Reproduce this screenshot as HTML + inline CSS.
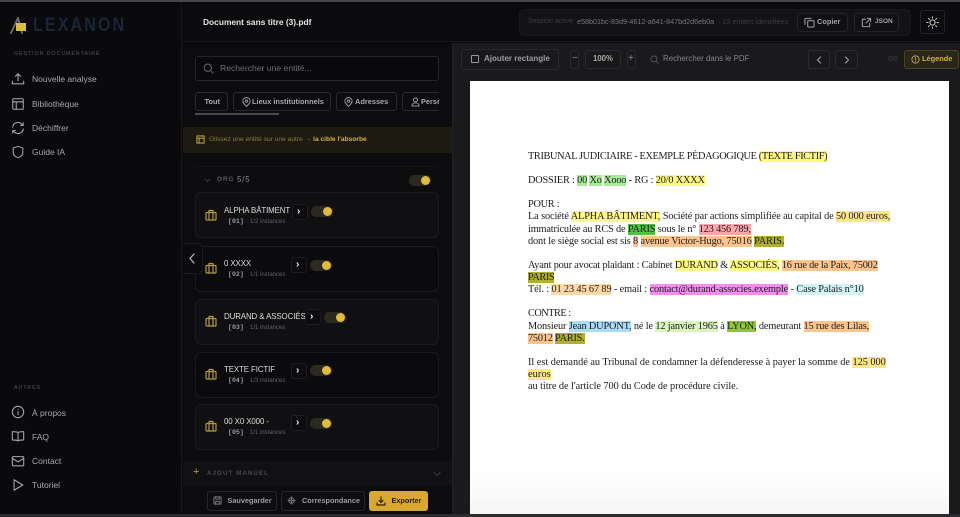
<!DOCTYPE html>
<html lang="fr"><head><meta charset="utf-8"><title>Lexanon</title>
<style>
*{box-sizing:border-box;margin:0;padding:0}
html,body{width:960px;height:517px;overflow:hidden;background:#0a0a0c;font-family:"Liberation Sans",sans-serif;color:#ddd}
body{filter:blur(.3px)}
.a{position:absolute;white-space:nowrap}
svg{position:absolute;fill:none;stroke:currentColor;stroke-width:1.5;stroke-linecap:round;stroke-linejoin:round}
.nav{position:absolute;left:32px;font-size:8.5px;color:#a8a8ac;line-height:12px;white-space:nowrap}
.ni{color:#a8a8ac;left:11px;width:14px;height:14px;stroke-width:1.2}
.sec{position:absolute;left:14px;font-size:5.2px;letter-spacing:1px;color:#55555b;white-space:nowrap}
.box{position:absolute;border:1px solid #232327;border-radius:3px}
.chip{position:absolute;top:92px;height:19px;border:1px solid #29292d;border-radius:3px;background:#0d0d10;font-size:7.4px;font-weight:bold;color:#a8a8ac;line-height:17px;white-space:nowrap}
.card{position:absolute;left:195px;width:244px;height:46px;border:1px solid #1b1b1f;border-radius:6px;background:#101013}
.name{position:absolute;left:224px;font-size:7.9px;letter-spacing:-.1px;color:#dcdcdc;white-space:nowrap;line-height:10px;margin-top:.5px}
.idx{position:absolute;left:228px;font-size:6.6px;font-family:"Liberation Mono",monospace;color:#9a9a9e;white-space:nowrap;font-weight:bold;line-height:8px;margin-top:1px}
.inst{position:absolute;left:250px;font-size:6px;color:#636368;white-space:nowrap;line-height:8px;margin-top:1px}
.arrow{position:absolute;width:16px;height:16px;border:1px solid #1e1e22;border-radius:3px;background:#0c0c0e;color:#eee}
.tog{position:absolute;width:22px;height:11px;border-radius:6px;background:#2c2a20}
.tog i{position:absolute;right:0;top:1px;width:9px;height:9px;border-radius:50%;background:#e2bb38}
.bag{color:#b39a3e;left:205px;width:12px;height:12px;stroke-width:1.2}
.btn{position:absolute;top:491px;height:20px;border:1px solid #26262a;border-radius:3px;background:#0e0e11;font-size:7.3px;font-weight:bold;color:#9c9ca0;line-height:18px;white-space:nowrap}
.tb{position:absolute;border:1px solid #2a2a2d;border-radius:3px;background:#19191b}
#doc{position:absolute;left:528px;top:1px;font-family:"Liberation Serif",serif;font-size:10.3px;color:#1c1c1c;white-space:nowrap}
#doc div{position:absolute;left:0;line-height:12px;height:12px}
#doc b{font-weight:normal}
.y{background:#fdf981}.g{background:#a6eb96}.o{background:#fdc58e}.ol{background:#b0b02e}.dg{background:#4fc144}
.r{background:#fba6ad}.yo{background:#fee688}.p{background:#f58cf0}.c{background:#d4f3f5}.b{background:#aadcfb}.lg{background:#d8f5bd}.lv{background:#8fc637}
</style></head><body>
<!-- frame strips -->
<div class="a" style="left:0;top:0;width:960px;height:2px;background:#454547"></div>
<div class="a" style="left:0;top:514px;width:960px;height:3px;background:#2b2b2d"></div>

<!-- sidebar -->
<div class="a" style="left:0;top:2px;width:182px;height:512px;background:#0a0a0d;border-right:1px solid #18181b"></div>
<svg style="left:10px;top:16px;width:18px;height:18px;stroke:#6a6a6a;stroke-width:2" viewBox="0 0 18 18"><path d="M1 17L8 2L12 17"/></svg>
<div class="a" style="left:16px;top:23px;width:10px;height:8px;background:#d9bf3c"></div>
<div class="a" style="left:33px;top:14px;font-size:19px;letter-spacing:2.4px;color:#1a2535;font-weight:bold;line-height:24px;transform:scaleX(.85);transform-origin:left">LEXANON</div>
<div class="sec" style="top:51px">GESTION DOCUMENTAIRE</div>
<svg class="ni" style="top:72px" viewBox="0 0 16 16"><path d="M1.500 10.500v3h13v-3M8 10V2M5 5l3-3 3 3"/></svg>
<div class="nav" style="top:73px">Nouvelle analyse</div>
<svg class="ni" style="top:97px" viewBox="0 0 16 16"><rect x="2" y="2" width="12" height="12" rx="1"/><path d="M2 5.500h12M6 5.500V14"/></svg>
<div class="nav" style="top:97.500px">Bibliothèque</div>
<svg class="ni" style="top:121px" viewBox="0 0 16 16"><path d="M2 7a6 6 0 0 1 11-2.500M14 2v3h-3M14 9a6 6 0 0 1-11 2.500M2 14v-3h3"/></svg>
<div class="nav" style="top:121.500px">Déchiffrer</div>
<svg class="ni" style="top:145px" viewBox="0 0 16 16"><path d="M8 1.500l5.500 2v5c0 3-2.500 5-5.500 6-3-1-5.500-3-5.500-6v-5z"/></svg>
<div class="nav" style="top:146px">Guide IA</div>
<div class="sec" style="top:385px">AUTRES</div>
<svg class="ni" style="top:405px" viewBox="0 0 16 16"><circle cx="8" cy="8" r="6.500"/><path d="M8 7.500v3.500M8 5v.2"/></svg>
<div class="nav" style="top:406.500px">À propos</div>
<svg class="ni" style="top:429px" viewBox="0 0 16 16"><path d="M8 4C6.500 3 4 3 1.500 3v9.500c2.500 0 5 0 6.500 1 1.500-1 4-1 6.500-1V3C12 3 9.500 3 8 4zM8 4v9.500"/></svg>
<div class="nav" style="top:430.500px">FAQ</div>
<svg class="ni" style="top:454px" viewBox="0 0 16 16"><rect x="1.500" y="3" width="13" height="10.500" rx="1"/><path d="M1.500 5l6.500 4 6.500-4"/></svg>
<div class="nav" style="top:455px">Contact</div>
<svg class="ni" style="top:478px" viewBox="0 0 16 16"><path d="M3.500 2l10 6-10 6z"/></svg>
<div class="nav" style="top:479px">Tutoriel</div>

<!-- header -->
<div class="a" style="left:183px;top:2px;width:777px;height:40px;background:#0b0b0e;border-bottom:1px solid #17171a"></div>
<div class="a" style="left:203px;top:16px;font-size:8.4px;font-weight:bold;color:#e4e4e4;line-height:12px">Document sans titre (3).pdf</div>
<div class="a" style="left:519px;top:9px;width:392px;height:27px;border-radius:6px;background:#131316;border:1px solid #19191c"></div>
<div class="a" style="left:528px;top:16px;font-size:7px;line-height:12px;color:#3c3c40">Session active</div>
<div class="a" style="left:577px;top:16px;font-size:7.2px;line-height:12px;color:#77777b">e58b01bc-83d9-4612-a641-847bd2d6eb0a</div>
<div class="a" style="left:718px;top:16px;font-size:7.200px;line-height:12px;color:#3c3c40">· 23 entités identifiées</div>
<div class="box" style="left:797px;top:13px;width:51px;height:19px;background:#111114"></div>
<svg style="left:804px;top:17px;width:11px;height:11px;color:#98989c;stroke-width:1.200" viewBox="0 0 12 12"><rect x="4" y="4" width="7" height="7" rx="1"/><path d="M8 1.500H2a1 1 0 0 0-1 1V8"/></svg>
<div class="a" style="left:817px;top:16px;font-size:7.400px;font-weight:bold;line-height:12px;color:#a4a4a8">Copier</div>
<div class="box" style="left:854px;top:13px;width:45px;height:19px;background:#111114"></div>
<svg style="left:861px;top:17px;width:11px;height:11px;color:#98989c;stroke-width:1.200" viewBox="0 0 12 12"><path d="M9.500 7v3.500h-8v-8H5M7 1.500h3.500V5M10.500 1.500L5.500 6.500"/></svg>
<div class="a" style="left:875px;top:16px;font-size:6.500px;font-weight:bold;line-height:12px;color:#a4a4a8">JSON</div>
<div class="box" style="left:920px;top:10px;width:25px;height:24px;background:#0c0c0f"></div>
<svg style="left:926px;top:16px;width:13px;height:13px;color:#c8c8c8;stroke-width:1.100" viewBox="0 0 14 14"><circle cx="7" cy="7" r="2.800"/><path d="M7 .8v1.400M7 11.800v1.400M.8 7h1.400M11.800 7h1.400M2.600 2.600l1 1M10.400 10.400l1 1M2.600 11.400l1-1M10.400 3.600l1-1"/></svg>

<!-- left panel -->
<div class="a" style="left:183px;top:43px;width:269px;height:471px;background:#0c0c0f"></div>
<div class="box" style="left:195px;top:56px;width:244px;height:25px;background:#09090b;border-color:#25252a"></div>
<svg style="left:203px;top:63px;width:11px;height:11px;color:#626266;stroke-width:1.200" viewBox="0 0 12 12"><circle cx="5.200" cy="5.200" r="4"/><path d="M8.200 8.200l2.800 2.800"/></svg>
<div class="a" style="left:220px;top:62px;font-size:8.600px;line-height:13px;color:#6d6d71">Rechercher une entité...</div>
<div class="chip" style="left:195px;width:33px;padding-left:8.500px">Tout</div>
<div class="chip" style="left:233px;width:98px;padding-left:18px">Lieux institutionnels</div>
<svg style="left:242px;top:97px;width:9px;height:10px;color:#98989c;stroke-width:1.100" viewBox="0 0 10 11"><path d="M5 10.500C2.500 8 1 6.500 1 4.500a4 4 0 0 1 8 0c0 2-1.500 3.500-4 6z"/><circle cx="5" cy="4.500" r="1.300"/></svg>
<div class="chip" style="left:336px;width:61px;padding-left:18px">Adresses</div>
<svg style="left:344px;top:97px;width:9px;height:10px;color:#98989c;stroke-width:1.100" viewBox="0 0 10 11"><path d="M5 10.500C2.500 8 1 6.500 1 4.500a4 4 0 0 1 8 0c0 2-1.500 3.500-4 6z"/><circle cx="5" cy="4.500" r="1.300"/></svg>
<div class="chip" style="left:402px;width:37px;padding-left:18px;border-right:0;border-radius:3px 0 0 3px;overflow:hidden">Perso</div>
<svg style="left:411px;top:97px;width:9px;height:10px;color:#98989c;stroke-width:1.100" viewBox="0 0 10 11"><circle cx="5" cy="3.200" r="2.200"/><path d="M1 10c0-2.500 2-3.500 4-3.500s4 1 4 3.500z"/></svg>
<div class="a" style="left:195px;top:113px;width:84px;height:1.500px;background:#4a4a4d"></div>
<div class="a" style="left:183px;top:127px;width:269px;height:26px;background:#1d1a12"></div>
<svg style="left:196px;top:135px;width:9px;height:9px;color:#b39a3e;stroke-width:1.200" viewBox="0 0 10 10"><rect x="1" y="1" width="8" height="8"/><path d="M1 3.500h8M3.500 3.500V9"/></svg>
<div class="a" style="left:209px;top:134px;font-size:6.650px;line-height:12px;color:#8a7a3d">Glissez une entité sur une autre → <b style="color:#d6b23b">la cible l'absorbe</b></div>
<div class="a" style="left:195px;top:166px;width:244px;height:1px;background:#141417"></div>
<svg style="left:204px;top:178px;width:7px;height:5px;color:#3a3a3e;stroke-width:1" viewBox="0 0 7 5"><path d="M1 1l2.500 2.500L6 1"/></svg>
<div class="a" style="left:217px;top:175px;font-size:6.500px;font-weight:bold;letter-spacing:.8px;color:#5a5a5e;line-height:10px">ORG</div>
<div class="a" style="left:237px;top:174px;font-size:8px;letter-spacing:.8px;color:#8a8a8e;line-height:12px">5/5</div>
<div class="tog" style="left:409px;top:175px"><i style="right:1px"></i></div>

<div class="card" style="top:192px"></div>
<div class="card" style="top:246px;background:#0b0b0e"></div>
<div class="card" style="top:299px"></div>
<div class="card" style="top:352px;background:#0b0b0e"></div>
<div class="card" style="top:404px;background:#101013"></div>

<svg class="bag" style="top:209px" viewBox="0 0 12 12"><rect x="1" y="3.500" width="10" height="7.500" rx=".8"/><path d="M4 3.500V1.500h4v2M4 3.500V11M8 3.500V11"/></svg>
<div class="name" style="top:205px">ALPHA BÂTIMENT</div>
<div class="idx" style="top:217px">[01]</div><div class="inst" style="top:217px">1/2 instances</div>
<div class="arrow" style="left:292px;top:204px"></div><div class="a" style="left:297px;top:205px;font-size:10px;font-weight:bold;color:#eee;line-height:13px">›</div>
<div class="tog" style="left:311px;top:206px"></div><div class="a" style="left:323px;top:207px;width:9px;height:9px;border-radius:50%;background:#e2bb38"></div>

<svg class="bag" style="top:262px" viewBox="0 0 12 12"><rect x="1" y="3.500" width="10" height="7.500" rx=".8"/><path d="M4 3.500V1.500h4v2M4 3.500V11M8 3.500V11"/></svg>
<div class="name" style="top:258px">0 XXXX</div>
<div class="idx" style="top:270px">[02]</div><div class="inst" style="top:270px">1/1 instances</div>
<div class="arrow" style="left:291px;top:257px"></div><div class="a" style="left:296px;top:258px;font-size:10px;font-weight:bold;color:#eee;line-height:13px">›</div>
<div class="tog" style="left:310px;top:260px"></div><div class="a" style="left:322px;top:261px;width:9px;height:9px;border-radius:50%;background:#e2bb38"></div>

<svg class="bag" style="top:315px" viewBox="0 0 12 12"><rect x="1" y="3.500" width="10" height="7.500" rx=".8"/><path d="M4 3.500V1.500h4v2M4 3.500V11M8 3.500V11"/></svg>
<div class="name" style="top:311px">DURAND &amp; ASSOCIÉS</div>
<div class="idx" style="top:323px">[03]</div><div class="inst" style="top:323px">1/1 instances</div>
<div class="arrow" style="left:305px;top:309px"></div><div class="a" style="left:310px;top:310px;font-size:10px;font-weight:bold;color:#eee;line-height:13px">›</div>
<div class="tog" style="left:324px;top:312px"></div><div class="a" style="left:336px;top:313px;width:9px;height:9px;border-radius:50%;background:#e2bb38"></div>

<svg class="bag" style="top:368px" viewBox="0 0 12 12"><rect x="1" y="3.500" width="10" height="7.500" rx=".8"/><path d="M4 3.500V1.500h4v2M4 3.500V11M8 3.500V11"/></svg>
<div class="name" style="top:364px">TEXTE FICTIF</div>
<div class="idx" style="top:376px">[04]</div><div class="inst" style="top:376px">1/3 instances</div>
<div class="arrow" style="left:291px;top:363px"></div><div class="a" style="left:296px;top:364px;font-size:10px;font-weight:bold;color:#eee;line-height:13px">›</div>
<div class="tog" style="left:310px;top:365px"></div><div class="a" style="left:322px;top:366px;width:9px;height:9px;border-radius:50%;background:#e2bb38"></div>

<svg class="bag" style="top:420px" viewBox="0 0 12 12"><rect x="1" y="3.500" width="10" height="7.500" rx=".8"/><path d="M4 3.500V1.500h4v2M4 3.500V11M8 3.500V11"/></svg>
<div class="name" style="top:416px">00 X0 X000 -</div>
<div class="idx" style="top:428px">[05]</div><div class="inst" style="top:428px">1/1 instances</div>
<div class="arrow" style="left:291px;top:415px"></div><div class="a" style="left:296px;top:416px;font-size:10px;font-weight:bold;color:#eee;line-height:13px">›</div>
<div class="tog" style="left:310px;top:418px"></div><div class="a" style="left:322px;top:419px;width:9px;height:9px;border-radius:50%;background:#e2bb38"></div>

<!-- collapse tab -->
<div class="a" style="left:183px;top:243px;width:20px;height:31px;background:#0b0b0e;border:1px solid #1c1c20;border-left:0;border-radius:0 5px 5px 0"></div>
<svg style="left:188px;top:253px;width:8px;height:11px;color:#bbb;stroke-width:1.200" viewBox="0 0 8 11"><path d="M6 1L2 5.500 6 10"/></svg>

<!-- manual add -->
<div class="a" style="left:183px;top:461px;width:269px;height:25px;background:#111114"></div>
<div class="a" style="left:193px;top:465px;font-size:11px;line-height:14px;color:#b39a3e">+</div>
<div class="a" style="left:207px;top:469px;font-size:6.300px;font-weight:bold;letter-spacing:1px;color:#48484c;line-height:10px">AJOUT MANUEL</div>
<svg style="left:433px;top:471px;width:8px;height:6px;color:#3c3c40;stroke-width:1.200" viewBox="0 0 10 7"><path d="M1 1.500l4 4 4-4"/></svg>

<!-- action buttons -->
<div class="btn" style="left:207px;width:70px;padding-left:19.500px">Sauvegarder</div>
<svg style="left:213px;top:496px;width:9px;height:9px;color:#77777b;stroke-width:1.100" viewBox="0 0 10 10"><rect x="1" y="1" width="8" height="8" rx="1"/><path d="M3 1v2.500h4V1M3 9V6h4v3"/></svg>
<div class="btn" style="left:281px;width:84px;padding-left:20px">Correspondance</div>
<svg style="left:287px;top:496px;width:9px;height:9px;color:#77777b;stroke-width:1.100" viewBox="0 0 10 10"><circle cx="5" cy="5" r="3"/><path d="M5 1v8M1 5h8"/></svg>
<div class="btn" style="left:369px;width:59px;padding-left:21.500px;background:#d9a92f;border-color:#d9a92f;color:#22190a">Exporter</div>
<svg style="left:376px;top:496px;width:10px;height:10px;color:#2c2008;stroke-width:1.200" viewBox="0 0 10 10"><path d="M5 1v5.500M3 4.500l2 2 2-2M1 7v2h8V7"/></svg>

<!-- pdf toolbar -->
<div class="a" style="left:452px;top:43px;width:508px;height:471px;background:#1a1a1c;border-left:1px solid #222"></div>
<div class="tb" style="left:461px;top:49px;width:98px;height:21px"></div>
<div class="a" style="left:471px;top:55px;width:8px;height:8px;border:1px solid #98989c;border-radius:1px"></div>
<div class="a" style="left:484px;top:53px;font-size:8px;font-weight:bold;line-height:12px;color:#9c9c9f">Ajouter rectangle</div>
<div class="tb" style="left:570px;top:50px;width:9px;height:19px"></div>
<div class="a" style="left:572px;top:53px;font-size:10px;line-height:12px;color:#8c8c8f">−</div>
<div class="tb" style="left:585px;top:50px;width:36px;height:19px"></div>
<div class="a" style="left:593px;top:53px;font-size:7.800px;font-weight:bold;line-height:12px;color:#aaa">100%</div>
<div class="tb" style="left:627px;top:50px;width:9px;height:19px"></div>
<div class="a" style="left:628px;top:53px;font-size:10px;line-height:12px;color:#8c8c8f">+</div>
<svg style="left:650px;top:55px;width:9px;height:9px;color:#58585c;stroke-width:1.200" viewBox="0 0 12 12"><circle cx="5.200" cy="5.200" r="4"/><path d="M8.200 8.200l2.800 2.800"/></svg>
<div class="a" style="left:663px;top:53px;font-size:7.900px;line-height:12px;color:#85858a">Rechercher dans le PDF</div>
<div class="tb" style="left:808px;top:50px;width:22px;height:19px"></div>
<svg style="left:816px;top:56px;width:6px;height:8px;color:#9a9a9e;stroke-width:1.200" viewBox="0 0 6 8"><path d="M4.500 1L1.500 4l3 3"/></svg>
<div class="tb" style="left:835px;top:50px;width:23px;height:19px"></div>
<svg style="left:844px;top:56px;width:6px;height:8px;color:#9a9a9e;stroke-width:1.200" viewBox="0 0 6 8"><path d="M1.500 1l3 3-3 3"/></svg>
<div class="a" style="left:888px;top:54px;font-size:7px;line-height:12px;color:#3e3e42">0/0</div>
<div class="a" style="left:904px;top:50px;width:55px;height:19px;border:1px solid #4a4220;border-radius:3px;background:#29261a"></div>
<svg style="left:911px;top:55px;width:9px;height:9px;color:#c9a838;stroke-width:1.100" viewBox="0 0 10 10"><circle cx="5" cy="5" r="4"/><path d="M5 3v2.500M5 7v.1"/></svg>
<div class="a" style="left:922px;top:53px;font-size:7.400px;font-weight:bold;line-height:12px;color:#d6b03a">Légende</div>

<!-- paper -->
<div class="a" style="left:470px;top:81px;width:479px;height:433px;background:linear-gradient(#fff 90%,#f6f6f6)"></div>
<div id="doc">
<div style="top:150px;letter-spacing:-.36px">TRIBUNAL JUDICIAIRE - EXEMPLE PÉDAGOGIQUE <b class="y">(TEXTE FICTIF)</b></div>
<div style="top:174px;letter-spacing:-.18px">DOSSIER : <b class="g">00</b> <b class="g">Xo</b> <b class="g">Xooo</b> - RG : <b class="y">20/0 XXXX</b></div>
<div style="top:198px;letter-spacing:-.27px">POUR :</div>
<div style="top:210px;letter-spacing:-.12px">La société <b class="y">ALPHA BÂTIMENT,</b> Société par actions simplifiée au capital de <b class="yo">50 000 euros,</b></div>
<div style="top:223px;letter-spacing:-.16px">immatriculée au RCS de <b class="dg">PARIS</b> sous le n° <b class="r">123 456 789,</b></div>
<div style="top:235px;letter-spacing:-.125px">dont le siège social est sis <b class="o">8</b> <b class="o">avenue Victor-Hugo, 75016</b> <b class="ol">PARIS.</b></div>
<div style="top:259px;letter-spacing:-.18px">Ayant pour avocat plaidant : Cabinet <b class="y">DURAND</b> &amp; <b class="y">ASSOCIÉS,</b> <b class="o">16 rue de la Paix, 75002</b></div>
<div style="top:271px;letter-spacing:-.4px"><b class="ol">PARIS</b></div>
<div style="top:283px;letter-spacing:-.125px">Tél. : <b class="o" style="background:#fdd9a8">01 23 45 67 89</b> - email : <b class="p">contact@durand-associes.exemple</b> - <b class="c">Case Palais n°10</b></div>
<div style="top:307px;letter-spacing:-.5px">CONTRE :</div>
<div style="top:320px;letter-spacing:-.145px">Monsieur <b class="b">Jean DUPONT,</b> né le <b class="lg">12 janvier 1965</b> à <b class="lv">LYON,</b> demeurant <b class="o">15 rue des Lilas,</b></div>
<div style="top:332px;letter-spacing:-.22px"><b class="o">75012</b> <b class="ol">PARIS.</b></div>
<div style="top:356px;letter-spacing:-.02px">Il est demandé au Tribunal de condamner la défenderesse à payer la somme de <b class="yo">125 000</b></div>
<div style="top:368px;letter-spacing:.1px"><b class="yo">euros</b></div>
<div style="top:380px;letter-spacing:-.06px">au titre de l'article 700 du Code de procédure civile.</div>
</div>
</body></html>
